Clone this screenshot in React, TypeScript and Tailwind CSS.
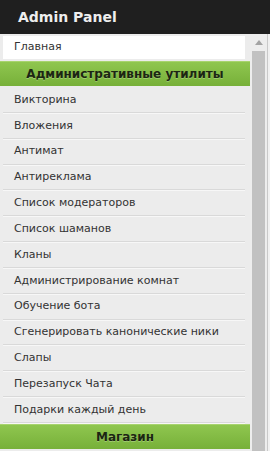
import React from "react";

const tools = [
  "Викторина",
  "Вложения",
  "Антимат",
  "Антиреклама",
  "Список модераторов",
  "Список шаманов",
  "Кланы",
  "Администрирование комнат",
  "Обучение бота",
  "Сгенерировать канонические ники",
  "Слапы",
  "Перезапуск Чата",
  "Подарки каждый день",
];

function SectionTitle({ title }: { title: string }) {
  return (
    <div className="h-[25px] border-t border-[#a8d46e] bg-gradient-to-b from-[#8fc64f] to-[#77b039] flex items-center justify-center text-[12px] font-bold text-[#1c2612] [text-shadow:0_1px_0_rgba(255,255,255,0.25)]">
      {title}
    </div>
  );
}

function MenuItem({ label }: { label: string }) {
  return (
    <div className="mx-[3px] mr-[5px] border-b border-[#f7f7f7]">
      <div className="h-[24.85px] border-b border-[#d9d9d9] flex items-center pl-[11px] text-[11px] text-[#333]">
        {label}
      </div>
    </div>
  );
}

export default function App() {
  return (
    <div className="w-[270px] h-[451px] overflow-hidden bg-[#ececec] flex flex-col font-['DejaVu_Sans',Verdana,sans-serif]">
      <div className="h-[34px] shrink-0 bg-[#1f1f1f] flex items-center pl-[18px] text-[14px] font-bold text-[#eeeeee]">
        Admin Panel
      </div>
      <div className="flex flex-1 min-h-0">
        {/* menu */}
        <div className="w-[250px] overflow-hidden pt-[2px]">
          <div className="mx-[3px] mr-[5px] h-[23px] bg-white flex items-center pl-[11px] text-[11px] text-[#333]">
            Главная
          </div>
          <div className="mt-[2px] mb-[2px]">
            <SectionTitle title="Административные утилиты" />
          </div>
          {tools.map((t) => (
            <MenuItem key={t} label={t} />
          ))}
          <SectionTitle title="Магазин" />
        </div>
        {/* scrollbar */}
        <div className="w-[17px] bg-[#ededed] flex flex-col items-center">
          <div className="h-[17px] w-full flex items-center justify-center">
            <svg width="8" height="5" viewBox="0 0 8 5">
              <path d="M4 0 L8 5 L0 5 Z" fill="#a3a3a3" />
            </svg>
          </div>
          <div className="w-[13px] flex-1 bg-[#c1c1c1]" />
        </div>
        <div className="w-[3px] flex">
          <div className="w-px bg-[#c9c9c9]" />
          <div className="flex-1 bg-[#f0f0f0]" />
        </div>
      </div>
    </div>
  );
}
